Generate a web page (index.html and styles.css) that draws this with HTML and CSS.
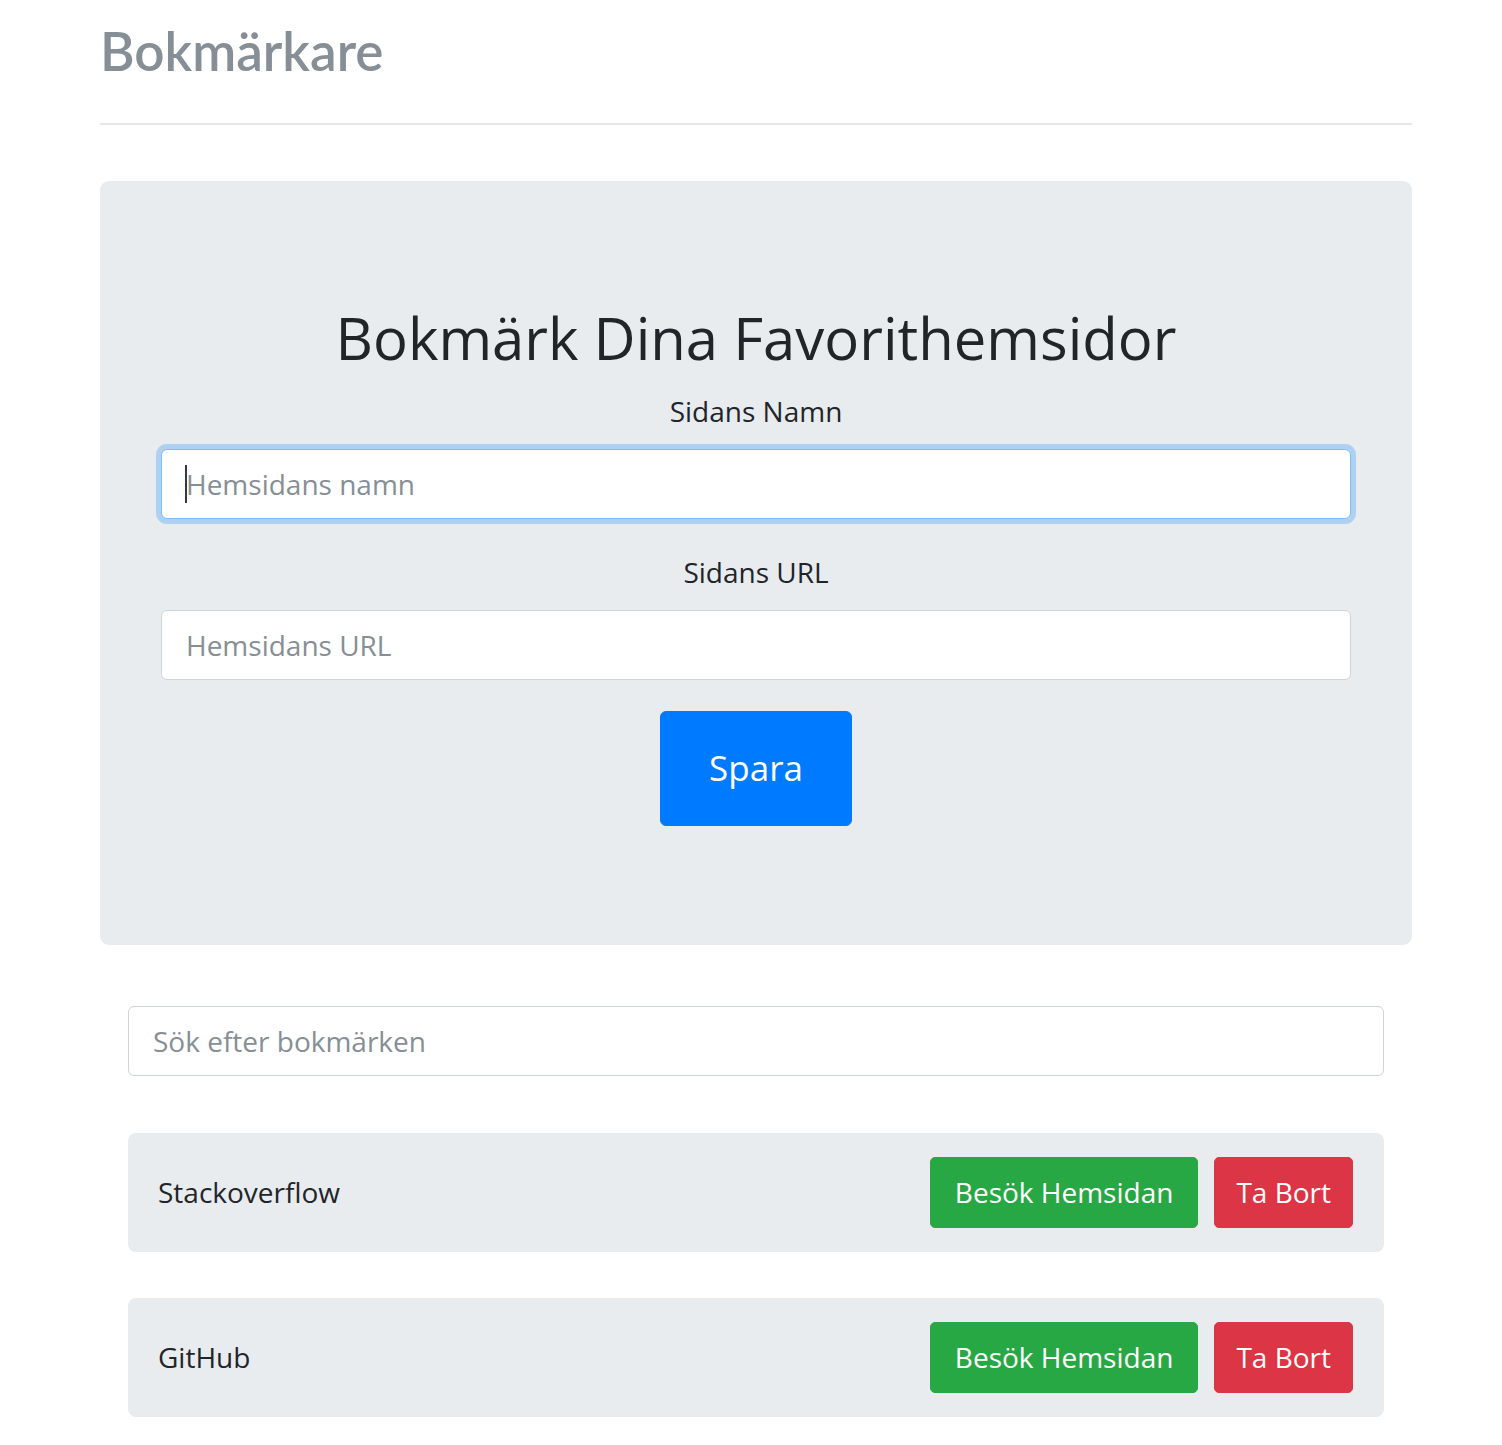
FILE: index.html
```html
<!DOCTYPE html>
<html lang="sv">
<head>
<meta charset="utf-8">
<title>Bokmärkare</title>
<link rel="stylesheet" href="styles.css">
</head>
<body>
<div class="container">
  <header class="header">
    <h3 class="brand">Bokmärkare</h3>
  </header>

  <div class="jumbotron">
    <h1 class="jumbo-title">Bokmärk Dina Favorithemsidor</h1>
    <form class="site-form">
      <div class="form-group">
        <label class="form-label" for="siteName">Sidans Namn</label>
        <div class="input-wrap">
          <input type="text" class="form-control is-focused" id="siteName" placeholder="Hemsidans namn">
          <span class="caret"></span>
        </div>
      </div>
      <div class="form-group second">
        <label class="form-label" for="siteUrl">Sidans URL</label>
        <input type="text" class="form-control" id="siteUrl" placeholder="Hemsidans URL">
      </div>
      <div class="submit-row">
        <button type="button" class="btn btn-primary btn-lg">Spara</button>
      </div>
    </form>
  </div>

  <div class="results">
    <input type="text" class="form-control" placeholder="Sök efter bokmärken">
    <div class="bookmarks">
      <div class="bookmark">
        <span class="bookmark-name">Stackoverflow</span>
        <div class="actions">
          <a class="btn btn-success">Besök Hemsidan</a>
          <a class="btn btn-danger">Ta Bort</a>
        </div>
      </div>
      <div class="bookmark">
        <span class="bookmark-name">GitHub</span>
        <div class="actions">
          <a class="btn btn-success">Besök Hemsidan</a>
          <a class="btn btn-danger">Ta Bort</a>
        </div>
      </div>
    </div>
  </div>
</div>
</body>
</html>
```
FILE: styles.css
```css
* { box-sizing: border-box; }

html, body {
  margin: 0;
  padding: 0;
  background: #ffffff;
}

body {
  font-family: "Open Sans", "Noto Sans", sans-serif;
  font-size: 28px;
  line-height: 1.5;
  color: #212529;
}

.container {
  width: 1312px;
  margin-left: 100px;
}

.header {
  padding-top: 19px;
  padding-bottom: 40px;
  border-bottom: 2px solid #e7e7e7;
}

.brand {
  margin: 0;
  font-family: "Lato", "Open Sans", sans-serif;
  font-weight: 600;
  font-size: 53px;
  line-height: 1.2;
  color: #868e96;
}

.jumbotron {
  margin-top: 56px;
  background: #e9ecef;
  border-radius: 9px;
  padding: 122px 61px 119px;
}

.jumbo-title {
  margin: 0 0 18px;
  font-size: 58px;
  font-weight: 400;
  line-height: 69px;
  text-align: center;
  color: #212529;
}

.form-label {
  display: block;
  text-align: center;
  line-height: 42px;
  margin-bottom: 17px;
}

.form-group.second {
  margin-top: 32px;
}

.form-control {
  display: block;
  width: 100%;
  height: 70px;
  padding: 13px 24px;
  font-family: inherit;
  font-size: 28px;
  line-height: 42px;
  color: #495057;
  background: #ffffff;
  border: 1px solid #ced4da;
  border-radius: 6px;
  outline: none;
}

.form-control::placeholder {
  color: #868e96;
  opacity: 1;
}

.form-control.is-focused {
  border-color: #80bdff;
  box-shadow: 0 0 0 5px rgba(0, 123, 255, 0.25);
}

.input-wrap {
  position: relative;
}

.caret {
  position: absolute;
  left: 24px;
  top: 16px;
  width: 2px;
  height: 38px;
  background: #343a40;
}

.submit-row {
  display: flex;
  justify-content: center;
  margin-top: 31px;
}

.btn {
  display: inline-flex;
  align-items: center;
  justify-content: center;
  font-family: inherit;
  font-size: 28px;
  line-height: 42px;
  color: #ffffff;
  border: 1px solid transparent;
  border-radius: 5px;
  cursor: pointer;
  text-decoration: none;
}

.btn-lg {
  width: 192px;
  height: 115px;
  padding: 0;
  font-size: 35px;
  border-radius: 6px;
}

.btn-primary {
  background: #007bff;
  border-color: #007bff;
}

.btn-success {
  background: #28a745;
  border-color: #28a745;
  height: 71px;
  padding: 0 24px;
}

.btn-danger {
  background: #dc3545;
  border-color: #dc3545;
  height: 71px;
  padding: 0 21px;
}

.results {
  margin: 61px 28px 0;
}

.bookmarks {
  margin-top: 57px;
  display: flex;
  flex-direction: column;
  gap: 46px;
}

.bookmark {
  display: flex;
  align-items: center;
  justify-content: space-between;
  background: #e9ecef;
  border-radius: 8px;
  padding: 24px 31px 24px 30px;
}

.bookmark-name {
  color: #212529;
}

.actions {
  display: flex;
  gap: 16px;
}
```
